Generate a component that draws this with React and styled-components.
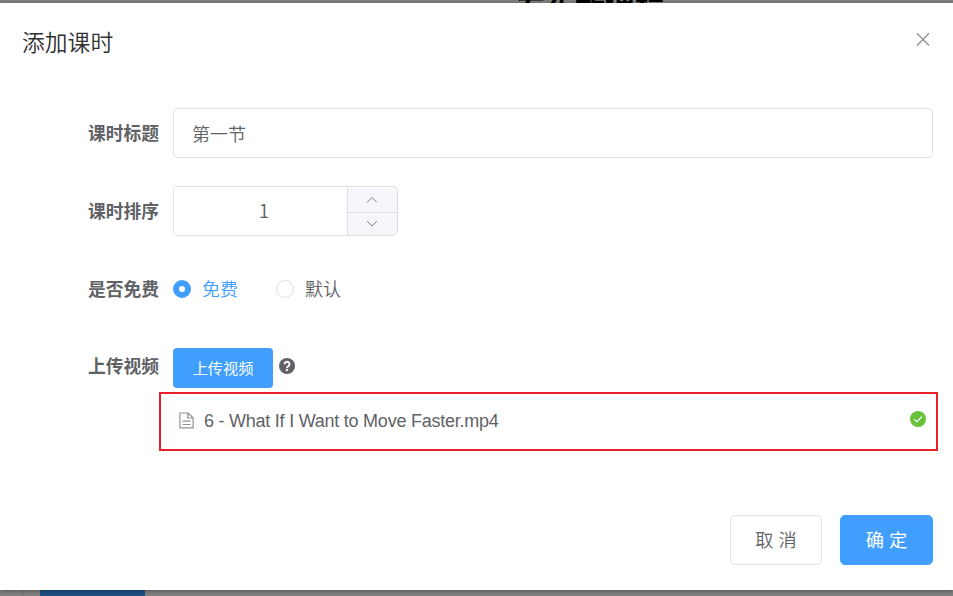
import React from "react";
import styled, { createGlobalStyle } from "styled-components";

const Global = createGlobalStyle`
  * { box-sizing: border-box; }
  body {
    margin: 0;
    background: #7f7f7f;
    font-family: "Liberation Sans", "Noto Sans CJK SC", sans-serif;
    color: #606266;
    overflow: hidden;
  }
  button, input { font-family: inherit; }
`;

const Page = styled.div`
  display: flex;
  flex-direction: column;
  width: 953px;
  height: 596px;
  overflow: hidden;
`;

const PageTop = styled.div`
  flex: 0 0 3px;
  overflow: hidden;
  padding-left: 515px;
`;

const PageTitle = styled.h2`
  margin: -9px 0 0;
  font-size: 30px;
  line-height: 30px;
  font-weight: 700;
  color: #000;
  white-space: nowrap;
`;

const PageBottom = styled.div`
  flex: 0 0 6px;
  display: flex;
`;

const PageGutter = styled.div`
  width: 23px;
  margin-right: 17px;
  border-right: 1px solid #707070;
`;

const PageButton = styled.div`
  width: 105px;
  background: #1f4f80;
`;

const Dialog = styled.section`
  position: relative;
  flex: 0 0 587px;
  display: flex;
  flex-direction: column;
  background: #fff;
  box-shadow: 0 1px 4px rgba(0, 0, 0, 0.35);
`;

const Header = styled.header`
  display: flex;
  justify-content: space-between;
  height: 105px;
  padding: 24px 22px 0 22px;
`;

const Title = styled.h1`
  margin: 1px 0 0;
  font-size: 22.8px;
  line-height: 30px;
  font-weight: 350;
  color: #303133;
`;

const CloseButton = styled.button`
  width: 16px;
  height: 16px;
  margin-top: 4px;
  padding: 0;
  border: 0;
  background: none;
  svg { display: block; }
`;

const FormRow = styled.div`
  display: flex;
  align-items: center;
  height: ${(p) => p.$height}px;
  margin-bottom: ${(p) => p.$gap}px;
  padding-right: 20px;
`;

const Label = styled.label`
  width: 173px;
  padding: ${(p) => (p.$raised ? "0 14px 2px 0" : "1px 14px 0 0")};
  text-align: right;
  font-size: 17.75px;
  line-height: 26px;
  font-weight: 700;
  white-space: nowrap;
`;

const TextInput = styled.input`
  flex: 1;
  min-width: 0;
  height: 50px;
  padding: 0 18px 1px;
  border: 1px solid #dcdfe6;
  border-radius: 5px;
  outline: 0;
  font-size: 18px;
  font-weight: 350;
  color: #606266;
`;

const NumberBox = styled.div`
  display: flex;
  width: 225px;
  height: 50px;
  border: 1px solid #dcdfe6;
  border-radius: 5px;
  overflow: hidden;
`;

const NumberInput = styled.input`
  flex: 1;
  min-width: 0;
  padding: 0 0 3px 7px;
  border: 0;
  outline: 0;
  text-align: center;
  font-family: "Noto Sans CJK SC", sans-serif;
  font-size: 19px;
  font-weight: 350;
  color: #606266;
`;

const Stepper = styled.div`
  display: flex;
  flex-direction: column;
  width: 50px;
  padding-top: 1px;
  border-left: 1px solid #dcdfe6;
`;

const StepButton = styled.button`
  display: flex;
  align-items: center;
  justify-content: center;
  flex: 0 0 24px;
  padding: 0 1px 0 0;
  border: 0;
  background: #f5f7fa;
  & + & { flex: 1; border-top: 1px solid #dcdfe6; }
`;

const RadioOption = styled.label`
  display: flex;
  align-items: center;
  margin-right: 38px;
  font-size: 18px;
  line-height: 26px;
  font-weight: 350;
  color: ${(p) => (p.$checked ? "#409eff" : "#606266")};
`;

const RadioText = styled.span`
  padding-top: 2px;
`;

const RadioMark = styled.span`
  width: 18px;
  height: 18px;
  margin-right: 11px;
  border-radius: 50%;
  background: #fff;
  border: ${(p) => (p.$checked ? "6.5px solid #409eff" : "1px solid #dcdfe6")};
`;

const UploadButton = styled.button`
  width: 100px;
  height: 40px;
  padding: 0 0 3px;
  border: 0;
  border-radius: 4px;
  background: #409eff;
  color: #fff;
  font-size: 15.2px;
  font-weight: 400;
`;

const HelpIcon = styled.svg`
  display: block;
  margin: -4px 0 0 6px;
`;

const FileRow = styled.div`
  display: flex;
  align-items: center;
  height: 59px;
  margin: 0 15px 64px 159px;
  padding: 0 10px 2px 18px;
  border: 2px solid #e8202a;
`;

const FileName = styled.span`
  flex: 1;
  margin-left: 10px;
  font-size: 18px;
  line-height: 24px;
  letter-spacing: -0.24px;
`;

const StatusIcon = styled.svg`
  margin-top: -4px;
`;

const Footer = styled.footer`
  display: flex;
  justify-content: flex-end;
  gap: 18px;
  padding-right: 20px;
`;

const ActionButton = styled.button`
  width: ${(p) => (p.$primary ? 93 : 92)}px;
  height: 50px;
  padding: 0 0 3px;
  border: 1px solid ${(p) => (p.$primary ? "#409eff" : "#dcdfe6")};
  border-radius: 5px;
  background: ${(p) => (p.$primary ? "#409eff" : "#fff")};
  color: ${(p) => (p.$primary ? "#fff" : "#606266")};
  font-size: 18.2px;
  font-weight: ${(p) => (p.$primary ? 400 : 350)};
`;

export default function App() {
  return (
    <>
      <Global />
      <Page>
        <PageTop>
          <PageTitle>发布新课程</PageTitle>
        </PageTop>
        <Dialog>
          <Header>
            <Title>添加课时</Title>
            <CloseButton aria-label="关闭">
              <svg width="16" height="16" viewBox="0 0 16 16" stroke="#909399" strokeWidth="1.4">
                <path d="M2 2.2 14 14.5M14 2.2 2 14.5" />
              </svg>
            </CloseButton>
          </Header>
          <FormRow $height={50} $gap={28}>
            <Label>课时标题</Label>
            <TextInput defaultValue="第一节" />
          </FormRow>
          <FormRow $height={50} $gap={28}>
            <Label>课时排序</Label>
            <NumberBox>
              <NumberInput defaultValue="1" />
              <Stepper>
                <StepButton aria-label="增加">
                  <svg width="12" height="8" viewBox="0 0 12 8" fill="none" stroke="#777a80">
                    <path d="m1.2 6.3 4.8-4.8 4.8 4.8" />
                  </svg>
                </StepButton>
                <StepButton aria-label="减少">
                  <svg width="12" height="8" viewBox="0 0 12 8" fill="none" stroke="#777a80">
                    <path d="m1.2 1.2 4.8 4.8 4.8-4.8" />
                  </svg>
                </StepButton>
              </Stepper>
            </NumberBox>
          </FormRow>
          <FormRow $height={50} $gap={34}>
            <Label>是否免费</Label>
            <RadioOption $checked>
              <RadioMark $checked />
              <RadioText>免费</RadioText>
            </RadioOption>
            <RadioOption>
              <RadioMark />
              <RadioText>默认</RadioText>
            </RadioOption>
          </FormRow>
          <FormRow $height={40} $gap={4}>
            <Label $raised>上传视频</Label>
            <UploadButton>上传视频</UploadButton>
            <HelpIcon width="16" height="16" viewBox="0 0 16 16">
              <circle cx="8" cy="8" r="8" fill="#606266" />
              <path d="M5.6 6.3a2.45 2.45 0 1 1 3.8 1.9C8.5 8.8 8 9.1 8 9.9" fill="none" stroke="#fff" strokeWidth="1.9" />
              <circle cx="8" cy="12" r="1.15" fill="#fff" />
            </HelpIcon>
          </FormRow>
          <FileRow>
            <svg width="15" height="17" viewBox="0 0 15 17" fill="none" stroke="#909399" strokeWidth="1.2">
              <path d="M.9 1h8.2l5 4.7v10.2H.9zM8.7 1v5h5.2M3.5 9.2h8M3.5 12.5h8" />
            </svg>
            <FileName>6 - What If I Want to Move Faster.mp4</FileName>
            <StatusIcon width="16" height="16" viewBox="0 0 16 16">
              <circle cx="8" cy="8" r="8" fill="#67c23a" />
              <path d="m4 8.1 2.7 2.7 5.3-5.2" fill="none" stroke="#fff" strokeWidth="1.2" />
            </StatusIcon>
          </FileRow>
          <Footer>
            <ActionButton>取 消</ActionButton>
            <ActionButton $primary>确 定</ActionButton>
          </Footer>
        </Dialog>
        <PageBottom>
          <PageGutter />
          <PageButton />
        </PageBottom>
      </Page>
    </>
  );
}
